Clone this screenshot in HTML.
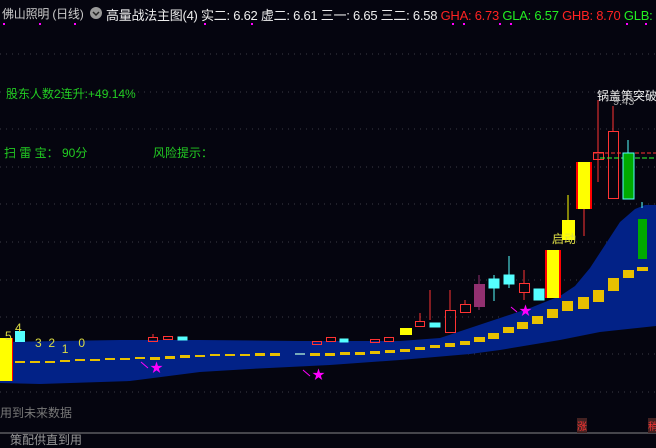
<!DOCTYPE html><html><head><meta charset="utf-8"><style>
body{margin:0;background:#05050f;width:656px;height:438px;overflow:hidden;position:relative;font-family:"Liberation Sans","Noto Sans CJK SC",sans-serif}
.t{position:absolute;white-space:nowrap;font-size:13px}
</style></head><body>
<svg width="656" height="438" style="position:absolute;left:0;top:0">
<g stroke="#3a3a44" stroke-dasharray="1,5">
<line x1="0" y1="54" x2="656" y2="54"/><line x1="0" y1="92" x2="656" y2="92"/><line x1="0" y1="129" x2="656" y2="129"/><line x1="0" y1="167" x2="656" y2="167"/><line x1="0" y1="204" x2="656" y2="204"/><line x1="0" y1="242" x2="656" y2="242"/><line x1="0" y1="280" x2="656" y2="280"/><line x1="0" y1="317" x2="656" y2="317"/><line x1="0" y1="354" x2="656" y2="354"/><line x1="0" y1="392" x2="656" y2="392"/>
</g>
<line x1="0" y1="433" x2="656" y2="433" stroke="#888"/>
<polygon fill="#022287" points="0,342 120,340 200,340 300,341 400,341 440,338 470,328 500,318 530,308 560,296 575,286 590,268 605,245 620,222 635,209 645,205 656,205 656,326 600,332 560,340 500,350 470,354 400,360 330,365 250,369 200,372 130,381 40,384 0,383"/>
<g fill="#e8c000">
<rect x="15" y="361" width="10" height="2"/><rect x="30" y="361" width="10" height="2"/><rect x="45" y="361" width="10" height="2"/><rect x="60" y="360" width="10" height="2"/><rect x="75" y="359" width="10" height="2"/><rect x="90" y="359" width="10" height="2"/><rect x="105" y="358" width="10" height="2"/><rect x="120" y="358" width="10" height="2"/><rect x="135" y="357" width="10" height="2"/><rect x="150" y="357" width="10" height="3"/><rect x="165" y="356" width="10" height="3"/><rect x="180" y="355" width="10" height="3"/><rect x="195" y="355" width="10" height="2"/><rect x="210" y="354" width="10" height="2"/><rect x="225" y="354" width="10" height="2"/><rect x="240" y="354" width="10" height="2"/><rect x="255" y="353" width="10" height="3"/><rect x="270" y="353" width="10" height="3"/><rect x="295" y="353" width="10" height="2" fill="#7ab"/><rect x="310" y="353" width="10" height="3"/><rect x="325" y="353" width="10" height="3"/><rect x="340" y="352" width="10" height="3"/><rect x="355" y="352" width="10" height="3"/><rect x="370" y="351" width="10" height="3"/><rect x="385" y="350" width="10" height="3"/><rect x="400" y="349" width="10" height="3"/><rect x="415" y="347" width="10" height="3"/><rect x="430" y="345" width="10" height="3"/><rect x="445" y="343" width="10" height="4"/><rect x="460" y="341" width="10" height="4"/><rect x="474" y="337" width="11" height="5"/><rect x="488" y="333" width="11" height="6"/><rect x="503" y="327" width="11" height="6"/><rect x="517" y="322" width="11" height="7"/><rect x="532" y="316" width="11" height="8"/><rect x="547" y="309" width="11" height="9"/><rect x="562" y="301" width="11" height="10"/><rect x="578" y="297" width="11" height="12"/><rect x="593" y="290" width="11" height="12"/><rect x="608" y="278" width="11" height="13"/><rect x="623" y="270" width="11" height="8"/><rect x="637" y="267" width="11" height="4"/>
</g>
<rect x="0" y="338" width="12" height="43" fill="#ff0"/><rect x="12" y="338" width="1" height="43" fill="#f00"/>
<rect x="15" y="331" width="10" height="11" fill="#5ff"/>
<g fill="none" stroke="#f33">
<rect x="148.5" y="337.5" width="9" height="4"/><rect x="163.5" y="336.5" width="9" height="3"/><line x1="153" y1="334" x2="153" y2="338"/>
<rect x="312.5" y="341.5" width="9" height="3"/><rect x="326.5" y="337.5" width="9" height="4"/>
<rect x="370.5" y="339.5" width="9" height="3"/><rect x="384.5" y="337.5" width="9" height="4"/>
<rect x="415.5" y="321.5" width="9" height="5"/><line x1="420" y1="313" x2="420" y2="322"/>
<rect x="445.5" y="310.5" width="10" height="22"/><line x1="450" y1="290" x2="450" y2="311"/>
<rect x="460.5" y="304.5" width="10" height="8"/><line x1="465" y1="300" x2="465" y2="305"/>
<rect x="519.5" y="283.5" width="10" height="9"/><line x1="524" y1="270" x2="524" y2="284"/><line x1="524" y1="292" x2="524" y2="300"/>
<rect x="593.5" y="152.5" width="10" height="7"/><line x1="598" y1="100" x2="598" y2="182"/>
<rect x="608.5" y="131.5" width="10" height="67"/><line x1="613" y1="106" x2="613" y2="132"/>
<line x1="593" y1="153" x2="656" y2="153" stroke-dasharray="4,2"/>
<line x1="430" y1="290" x2="430" y2="320"/>
</g>
<line x1="600" y1="158" x2="656" y2="158" stroke="#3f3" stroke-dasharray="5,2"/>
<rect x="474" y="284" width="11" height="23" fill="#923070"/><line x1="479" y1="275" x2="479" y2="310" stroke="#923070"/>
<g fill="#5ff" stroke="#5ff">
<rect x="178" y="337" width="9" height="3"/><rect x="340" y="339" width="8" height="3"/>
<rect x="430" y="323" width="10" height="4"/>
<rect x="489" y="279" width="10" height="9"/><line x1="494" y1="275" x2="494" y2="301"/>
<rect x="504" y="275" width="10" height="9"/><line x1="509" y1="256" x2="509" y2="288"/>
<rect x="534" y="289" width="10" height="11"/>
<line x1="642" y1="202" x2="642" y2="208"/>
</g>
<rect x="400" y="328" width="12" height="7" fill="#ff0"/>
<rect x="545" y="250" width="16" height="48" fill="#ff0"/><rect x="545" y="250" width="2" height="48" fill="#f00"/><rect x="559" y="250" width="2" height="48" fill="#f00"/>
<rect x="562" y="220" width="13" height="20" fill="#ff0"/><line x1="568" y1="195" x2="568" y2="221" stroke="#ff0"/>
<rect x="576" y="162" width="16" height="47" fill="#ff0"/><rect x="576" y="162" width="2" height="47" fill="#f00"/><rect x="590" y="162" width="2" height="47" fill="#f00"/><line x1="584" y1="209" x2="584" y2="236" stroke="#f33"/>
<rect x="623" y="153" width="11" height="46" fill="#0a0" stroke="#5ff"/><line x1="628" y1="140" x2="628" y2="153" stroke="#5ff"/>
<rect x="638" y="219" width="9" height="40" fill="#0a0"/>
<g fill="#f0f" font-size="13"><text x="150" y="372">★</text><text x="312" y="379">★</text><text x="519" y="315">★</text></g>
<g stroke="#f0f"><line x1="141" y1="362" x2="148" y2="368"/><line x1="303" y1="370" x2="310" y2="376"/><line x1="511" y1="307" x2="517" y2="312"/></g>
<g fill="#f0f"><rect x="3" y="23" width="2" height="2"/><rect x="39" y="23" width="2" height="2"/><rect x="74" y="23" width="2" height="2"/><rect x="204" y="23" width="2" height="2"/><rect x="251" y="23" width="2" height="2"/><rect x="452" y="23" width="2" height="2"/><rect x="463" y="23" width="2" height="2"/><rect x="499" y="23" width="2" height="2"/><rect x="510" y="23" width="2" height="2"/><rect x="626" y="23" width="2" height="2"/><rect x="645" y="23" width="2" height="2"/></g>
<circle cx="96" cy="13" r="6" fill="#999"/><path d="M93 12l3 3 3-3" stroke="#222" stroke-width="1.5" fill="none"/>
</svg>
<div class="t" style="left:2px;top:5px;color:#ccc;font-size:12px;letter-spacing:-0.2px">佛山照明 (日线)</div>
<div class="t" style="left:106px;top:5px;color:#eee;font-size:13px;letter-spacing:-0.25px">高量战法主图(4) 实二: 6.62 虚二: 6.61 三一: 6.65 三二: 6.58 <span style="color:#f22">GHA: 6.73</span> <span style="color:#2e2">GLA: 6.57</span> <span style="color:#f22">GHB: 8.70</span> <span style="color:#2e2">GLB: 8.</span></div>
<div class="t" style="left:6px;top:85px;color:#2c2;font-size:12px">股东人数2连升:+49.14%</div>
<div class="t" style="left:4px;top:144px;color:#2c2;font-size:12px">扫 雷 宝： 90分</div>
<div class="t" style="left:153px;top:144px;color:#2c2;font-size:12px">风险提示：</div>
<div class="t" style="left:597px;top:87px;color:#eee;font-size:12px">锅盖策突破</div>
<div class="t" style="left:613px;top:96px;color:#aaa;font-size:11px">9.43</div>
<div class="t" style="left:552px;top:230px;color:#dd4;font-size:12px">启动</div>
<div class="t" style="left:5px;top:329px;color:#dd4;font-size:12px">5 <span style="position:relative;top:-8px">4</span></div>
<div class="t" style="left:35px;top:336px;color:#dd4;font-size:12px">3 &nbsp;2 &nbsp;<span style="position:relative;top:6px">1</span> &nbsp;&nbsp;0</div>
<div class="t" style="left:0;top:404px;color:#777;font-size:12px">用到未来数据</div>
<div class="t" style="left:10px;top:431px;color:#999;font-size:12px">策配供直到用</div>
<div class="t" style="left:577px;top:418px;color:#f33;font-size:10px;background:#422">涨</div>
<div class="t" style="left:648px;top:418px;color:#f33;font-size:10px;background:#422">稍</div>
</body></html>
